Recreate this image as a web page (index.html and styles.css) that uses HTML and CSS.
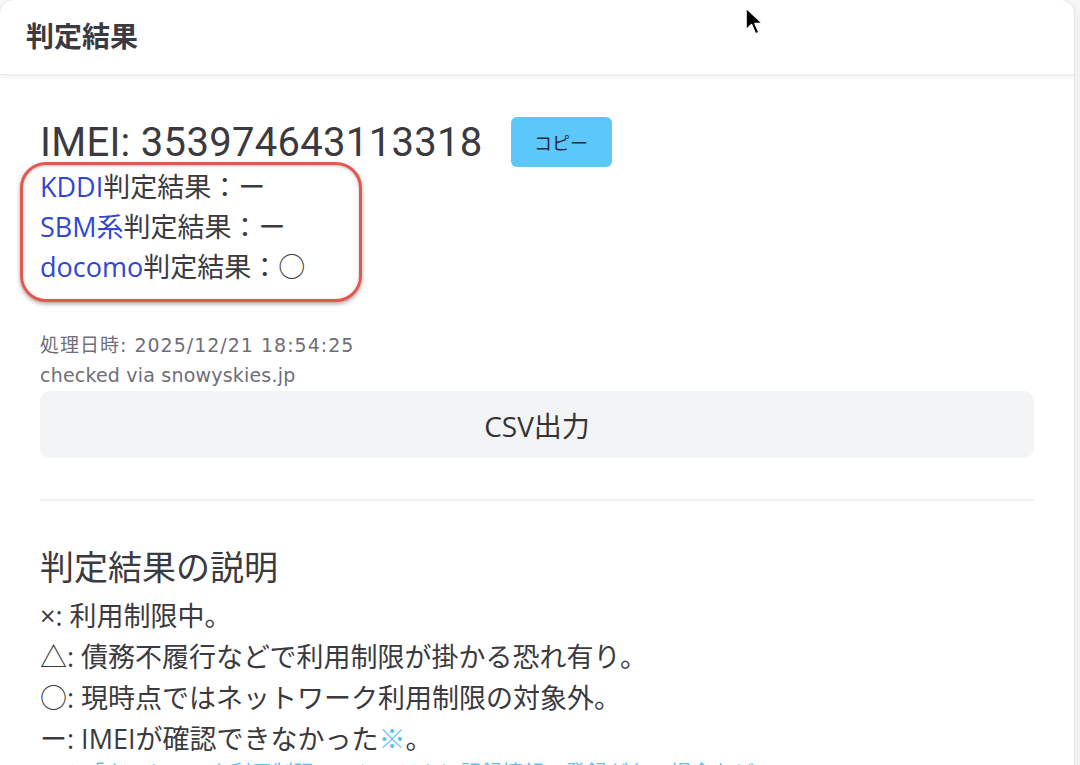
FILE: index.html
```html
<!DOCTYPE html>
<html lang="ja">
<head>
	<meta charset="UTF-8">
	<title>判定結果</title>
	<link rel="stylesheet" href="styles.css">
</head>
<body>
	<div class="resultModal">
		<div class="modalHead">判定結果</div>
		<div class="modalBody">
			<div class="imeiRow">
				<span class="imeiNum">IMEI: 353974643113318</span>
				<button class="copyBtn">コピー</button>
			</div>
			<div class="carrierList">
				<div class="carrierItem"><span class="carrier">KDDI</span>判定結果：ー</div>
				<div class="carrierItem"><span class="carrier">SBM系</span>判定結果：ー</div>
				<div class="carrierItem"><span class="carrier">docomo</span>判定結果：○</div>
				<div class="markBox"></div>
			</div>
			<div class="metaInfo">
				<div class="metaDate">処理日時: 2025/12/21 18:54:25</div>
				<div>checked via snowyskies.jp</div>
			</div>
			<button class="csvBtn">CSV出力</button>
			<hr class="divider">
			<h2 class="explainTitle">判定結果の説明</h2>
			<ul class="explainList">
				<li>×: 利用制限中。</li>
				<li>△: 債務不履行などで利用制限が掛かる恐れ有り。</li>
				<li>○: 現時点ではネットワーク利用制限の対象外。</li>
				<li>ー: IMEIが確認できなかった<span class="note">※</span>。</li>
				<li class="noteLine">※「ネットワーク利用制限」のシステムに記録情報の登録がない場合など</li>
			</ul>
		</div>
	</div>
	<div class="scrollTrack"></div>
	<svg class="cursor" width="22" height="32" viewBox="0 0 22 32">
		<path d="M2 2 L2 24 L7.5 18.5 L11.5 28 L15 26.5 L11 17.5 L18.5 17.5 Z" fill="#000" stroke="#fff" stroke-width="1.6" stroke-linejoin="round"/>
	</svg>
</body>
</html>
```

FILE: styles.css
```css
html, body {
  margin: 0;
  height: 100%;
  overflow: hidden;
}
body {
  background: #f6f6f6;
  font-family: "Open Sans", "Noto Sans CJK JP", sans-serif;
  color: #333;
  position: relative;
}
.resultModal {
  width: 1074px;
  height: 100%;
  background: #fff;
  border-radius: 14px 14px 0 0;
  box-shadow: 0 0 3px rgba(0, 0, 0, 0.12);
}
.modalHead {
  height: 70px;
  padding: 0 26px 4px;
  display: flex;
  align-items: center;
  font-size: 28px;
  font-weight: bold;
  color: #3a3a40;
  border-bottom: 1px solid #ececec;
  box-shadow: 0 3px 4px rgba(0, 0, 0, 0.06);
  position: relative;
}
.modalBody {
  padding: 42px 40px 0;
}
.imeiRow {
  display: flex;
  align-items: center;
  height: 50px;
}
.imeiNum {
  font-family: Roboto, "Noto Sans CJK JP", sans-serif;
  font-size: 40px;
  color: #3a3a40;
  letter-spacing: 0.3px;
}
.copyBtn {
  margin-left: 28px;
  width: 101px;
  height: 50px;
  border: 0;
  border-radius: 6px;
  background: #5bc8f9;
  color: #1f2b3a;
  font-family: inherit;
  font-size: 18px;
}
.carrierList {
  position: relative;
  font-size: 27px;
  line-height: 40px;
  color: #3a3a40;
}
.carrier {
  color: #3146cf;
}
.markBox {
  position: absolute;
  left: -20px;
  top: -5px;
  width: 336px;
  height: 134px;
  border: 3px solid #e2574e;
  border-radius: 26px;
  box-shadow: 0 2px 4px rgba(0, 0, 0, 0.35), inset 0 1px 3px rgba(0, 0, 0, 0.25);
}
.metaInfo {
  margin-top: 43px;
  font-family: "DejaVu Sans", "Noto Sans CJK JP", sans-serif;
  font-size: 19px;
  line-height: 30px;
  letter-spacing: 0.2px;
  color: #6e6e78;
}
.metaInfo .metaDate {
  letter-spacing: 1px;
}
.csvBtn {
  display: block;
  width: 100%;
  height: 67px;
  margin-top: 1px;
  border: 0;
  border-radius: 10px;
  background: #f3f4f6;
  color: #333;
  font-family: inherit;
  font-size: 28px;
}
.divider {
  margin: 41px 0 0;
  border: 0;
  height: 2px;
  background: #f0f0f0;
}
.explainTitle {
  margin: 42px 0 0;
  font-size: 34px;
  line-height: 48px;
  font-weight: normal;
  color: #3a3a40;
}
.explainList {
  list-style: none;
  margin: 4px 0 0;
  padding: 0;
  font-size: 27px;
  line-height: 41px;
  color: #3a3a40;
}
.explainList .noteLine {
  padding-left: 22px;
  font-size: 21px;
  line-height: 26px;
}
.note,
.noteLine {
  color: #5cc3ee;
}
.scrollTrack {
  position: absolute;
  top: 14px;
  right: 0;
  width: 5px;
  bottom: 0;
  background: #f2f2f2;
  border-left: 1px solid #e8e8e8;
}
.cursor {
  position: absolute;
  left: 744px;
  top: 6px;
}
```
